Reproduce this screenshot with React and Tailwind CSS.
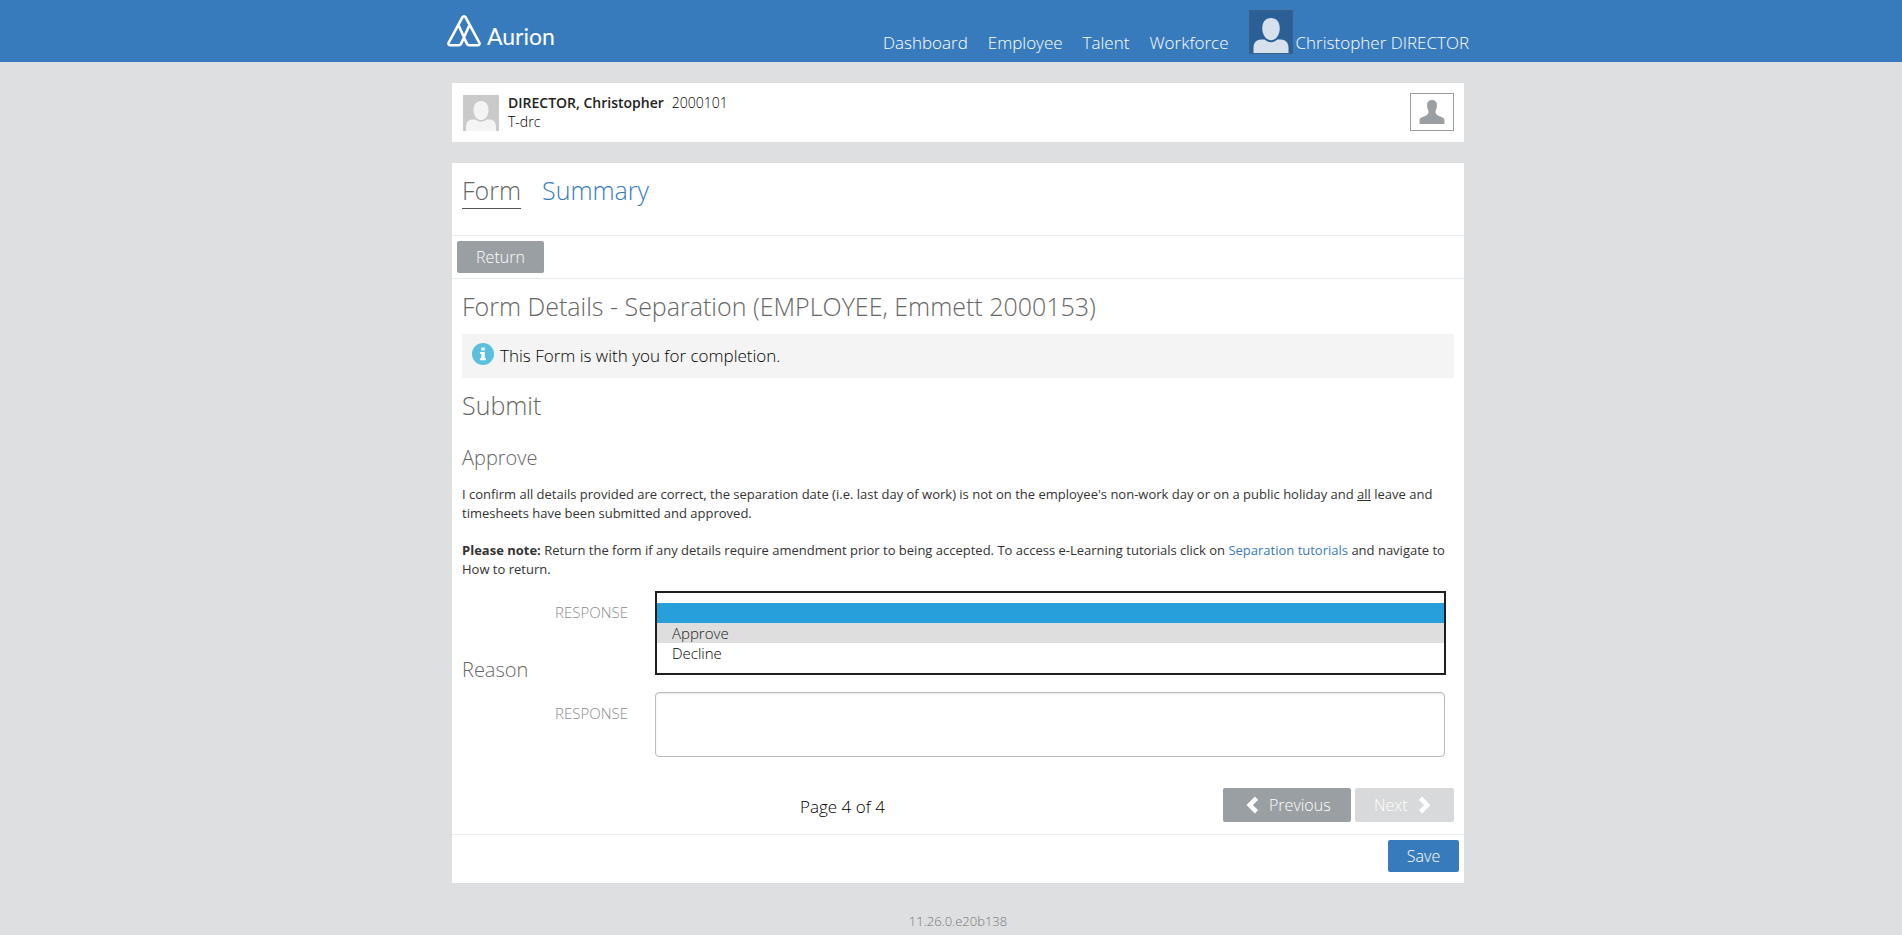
import React from "react";

function Avatar({ className }) {
  return (
    <svg viewBox="0 0 36 36" className={className} aria-hidden="true" fill="currentColor">
      <path d="M18 6c4.600 0 7.500 3.500 7.500 8.900 0 5.600-3.400 10.100-7.500 10.100s-7.500-4.500-7.500-10.100C10.500 9.500 13.400 6 18 6z" />
      <path d="M3 36v-4.500C3 27 6 24.500 9.500 24.500h3c1.500 1.400 3.500 2.200 5.500 2.200s4-.8 5.500-2.200h3c3.500 0 6.500 2.500 6.500 7V36z" />
    </svg>
  );
}

function Logo() {
  return (
    <a href="#home" className="flex items-end text-white">
      <svg viewBox="0 0 34 33" className="h-[33px] w-[34px]" fill="none" stroke="currentColor" strokeWidth="2.600" strokeLinejoin="round" strokeLinecap="round" aria-hidden="true">
        <path d="M21.800 12.500L14.700 28.500C13.900 30.700 13 31.200 11.500 31.200h-8c-1.700 0-2.500-1.200-1.800-2.600L15.500 3.200c.7-1.200 2.300-1.200 3 0l13.800 25.400c.7 1.400-.1 2.600-1.800 2.600h-8c-1.500 0-2.400-.5-3.200-2.700L12.200 12.500" />
      </svg>
      <span className="ml-[6px] pt-[11px] font-[Lato,sans-serif] text-[23px] leading-[22px] font-normal">Aurion</span>
    </a>
  );
}

function Chevron({ left }) {
  return (
    <svg viewBox="0 0 12 18" className="h-[18px] w-[12px]" fill="none" stroke="currentColor" strokeWidth="4.500" aria-hidden="true">
      <path d={left ? "M10.500 2.200L3.700 9l6.800 6.800" : "M1.500 2.200L8.300 9l-6.800 6.800"} />
    </svg>
  );
}

const navItems = ["Dashboard", "Employee", "Talent", "Workforce"];

export default function App() {
  return (
    <div className="min-h-screen bg-[#dedfe1] font-['Open_Sans',sans-serif] font-light text-[#222]">
      <header className="bg-[#387bbc] pl-[14px]">
        <div className="mx-auto flex h-[62px] max-w-[1022px] justify-between text-[17px] leading-6 text-white">
          <div className="pt-[14px]"><Logo /></div>
          <nav className="flex items-end gap-5 pb-[7px]">
            {navItems.map((n) => (
              <a key={n} href={"#" + n.toLowerCase()}>{n}</a>
            ))}
            <a href="#profile" className="flex items-end gap-[3px]">
              <span className="mb-px flex h-11 w-11 items-end justify-center border border-[#3c5f85] bg-[#2a6096] text-[#d6e1ec]">
                <Avatar className="h-[42px] w-[42px]" />
              </span>
              <span>Christopher DIRECTOR</span>
            </a>
          </nav>
        </div>
      </header>

      <div className="pl-[14px]">
        <div className="mx-auto max-w-[1012px]">
          <section className="mt-[21px] flex h-[59px] items-start justify-between bg-white pr-[10px] pl-[11px]">
            <div className="flex items-start gap-[9px] pt-[10px]">
              <Avatar className="mt-[2px] h-9 w-9 bg-[#cacaca] text-[#f4f4f4]" />
              <div className="text-sm leading-[19px] text-black">
                <p><span className="mr-2 font-semibold text-[#222]">DIRECTOR, Christopher</span>2000101</p>
                <p>T-drc</p>
              </div>
            </div>
            <button type="button" aria-label="Profile" className="mt-[10px] flex h-[38px] w-[44px] items-center justify-center border border-[#999b9e] text-[#9a9fa3]">
              <svg viewBox="0 0 26 24" className="h-6 w-[26px]" fill="currentColor" aria-hidden="true">
                <path d="M13 0c3.300 0 5 2 5 5.200 0 1.600-.3 2.700-.8 3.800-.5 1-.7 1.800-.7 3 0 1.700.8 2.600 2.500 3.400l4.500 2.200c1.500.8 2 1.600 2 3V24H.5v-3.400c0-1.400.5-2.200 2-3L7 15.400c1.700-.8 2.500-1.700 2.500-3.400 0-1.200-.2-2-.7-3C8.300 7.900 8 6.800 8 5.200 8 2 9.700 0 13 0z" />
              </svg>
            </button>
          </section>

          <main className="mt-[21px] bg-white">
            <nav className="flex h-[72px] gap-[21px] px-[10px] pt-[10px] text-[25px] leading-[34px]">
              <a href="#form" className="h-9 border-b border-[#555] text-[#666]">Form</a>
              <a href="#summary" className="text-[#387bbc]">Summary</a>
            </nav>
            <div className="border-y border-[#e6ecec] p-[5px]">
              <button type="button" className="h-8 w-[87px] rounded-[2px] bg-[#9a9fa3] text-base text-white">Return</button>
            </div>

            <div className="px-[10px] text-[#666]">
              <h1 className="pt-[10px] text-[25px] leading-[34px]">Form Details - Separation (EMPLOYEE, Emmett 2000153)</h1>
              <div className="mt-[11px] flex h-11 items-center gap-[6px] bg-[#f4f4f4] px-[10px] text-[17px] text-black">
                <svg viewBox="0 0 22 22" className="mb-1 h-[22px] w-[22px]" aria-hidden="true">
                  <circle cx="11" cy="11" r="11" fill="#5bc0de" />
                  <path fill="#fff" d="M9.300 4.500h3.500v3H9.300zM8 9h4.800v6.300H14v2H8v-2h1.300V11H8z" />
                </svg>
                <span>This Form is with you for completion.</span>
              </div>
              <h2 className="mt-[10px] text-[25px] leading-[34px]">Submit</h2>
              <h3 className="mt-[22px] text-xl leading-7">Approve</h3>
              <div className="mt-[13px] text-[13px] leading-[19px] font-normal text-[#333]">
                <p>
                  I confirm all details provided are correct, the separation date (i.e. last day of work) is not on the employee's non-work day or on a public holiday and <u>all</u> leave and timesheets have been submitted and approved.
                </p>
                <p className="mt-[18px]">
                  <b>Please note:</b> Return the form if any details require amendment prior to being accepted. To access e-Learning tutorials click on <a href="#tutorials" className="text-[#387bbc]">Separation tutorials</a> and navigate to How to return.
                </p>
              </div>

              <div className="mt-3 flex pr-[9px]">
                <label htmlFor="response" className="mt-[9px] w-[166px] text-right text-[15px] leading-6 text-[#8a8a8a]">RESPONSE</label>
                <div className="relative ml-[27px] flex-1">
                  <select id="response" className="h-10 w-full appearance-none rounded border border-[#bbb] bg-white px-4 text-base" defaultValue="">
                    <option value=""></option>
                    <option>Approve</option>
                    <option>Decline</option>
                  </select>
                  <ul role="listbox" aria-label="Response" className="absolute top-0 -right-px left-0 border-2 border-[#1f1f1f] bg-white py-[10px] text-[15px] leading-5 text-black">
                    <li role="option" aria-selected="true" className="h-5 bg-[#269fdb]"></li>
                    <li role="option" aria-selected="false" className="h-5 bg-[#dedede] px-[15px] text-[#222]">Approve</li>
                    <li role="option" aria-selected="false" className="h-5 px-[15px]">Decline</li>
                  </ul>
                </div>
              </div>

              <h3 className="mt-[25px] text-xl leading-7">Reason</h3>
              <div className="mt-2 flex pr-[9px]">
                <label htmlFor="reason" className="mt-[9px] w-[166px] text-right text-[15px] leading-6 text-[#8a8a8a]">RESPONSE</label>
                <textarea id="reason" className="ml-[27px] h-[65px] flex-1 resize-none rounded border border-[#bbb] bg-white p-2 text-base shadow-[inset_0_1px_2px_rgba(0,0,0,0.1)]"></textarea>
              </div>

              <div className="mt-[31px] flex h-[46px] items-start">
                <p className="flex-1 text-center text-[17px] leading-[38px] text-black">Page 4 of 4</p>
                <div className="flex gap-1 text-base text-white">
                  <button type="button" className="flex h-[34px] w-[128px] items-center gap-[11px] rounded-[2px] bg-[#9a9fa3] pl-[23px]"><Chevron left />Previous</button>
                  <button type="button" disabled className="flex h-[34px] w-[99px] items-center gap-[11px] rounded-[2px] bg-[#d7d9da] pl-[19px]">Next<Chevron /></button>
                </div>
              </div>
            </div>
            <div className="flex justify-end border-t border-[#e6ecec] px-[5px] pt-[5px] pb-[11px]">
              <button type="submit" className="h-8 w-[71px] rounded-[2px] bg-[#387bbc] text-base text-white">Save</button>
            </div>
          </main>
          <footer className="pt-7 text-center text-[13px] leading-5 text-[#777]">11.26.0.e20b138</footer>
        </div>
      </div>
    </div>
  );
}
